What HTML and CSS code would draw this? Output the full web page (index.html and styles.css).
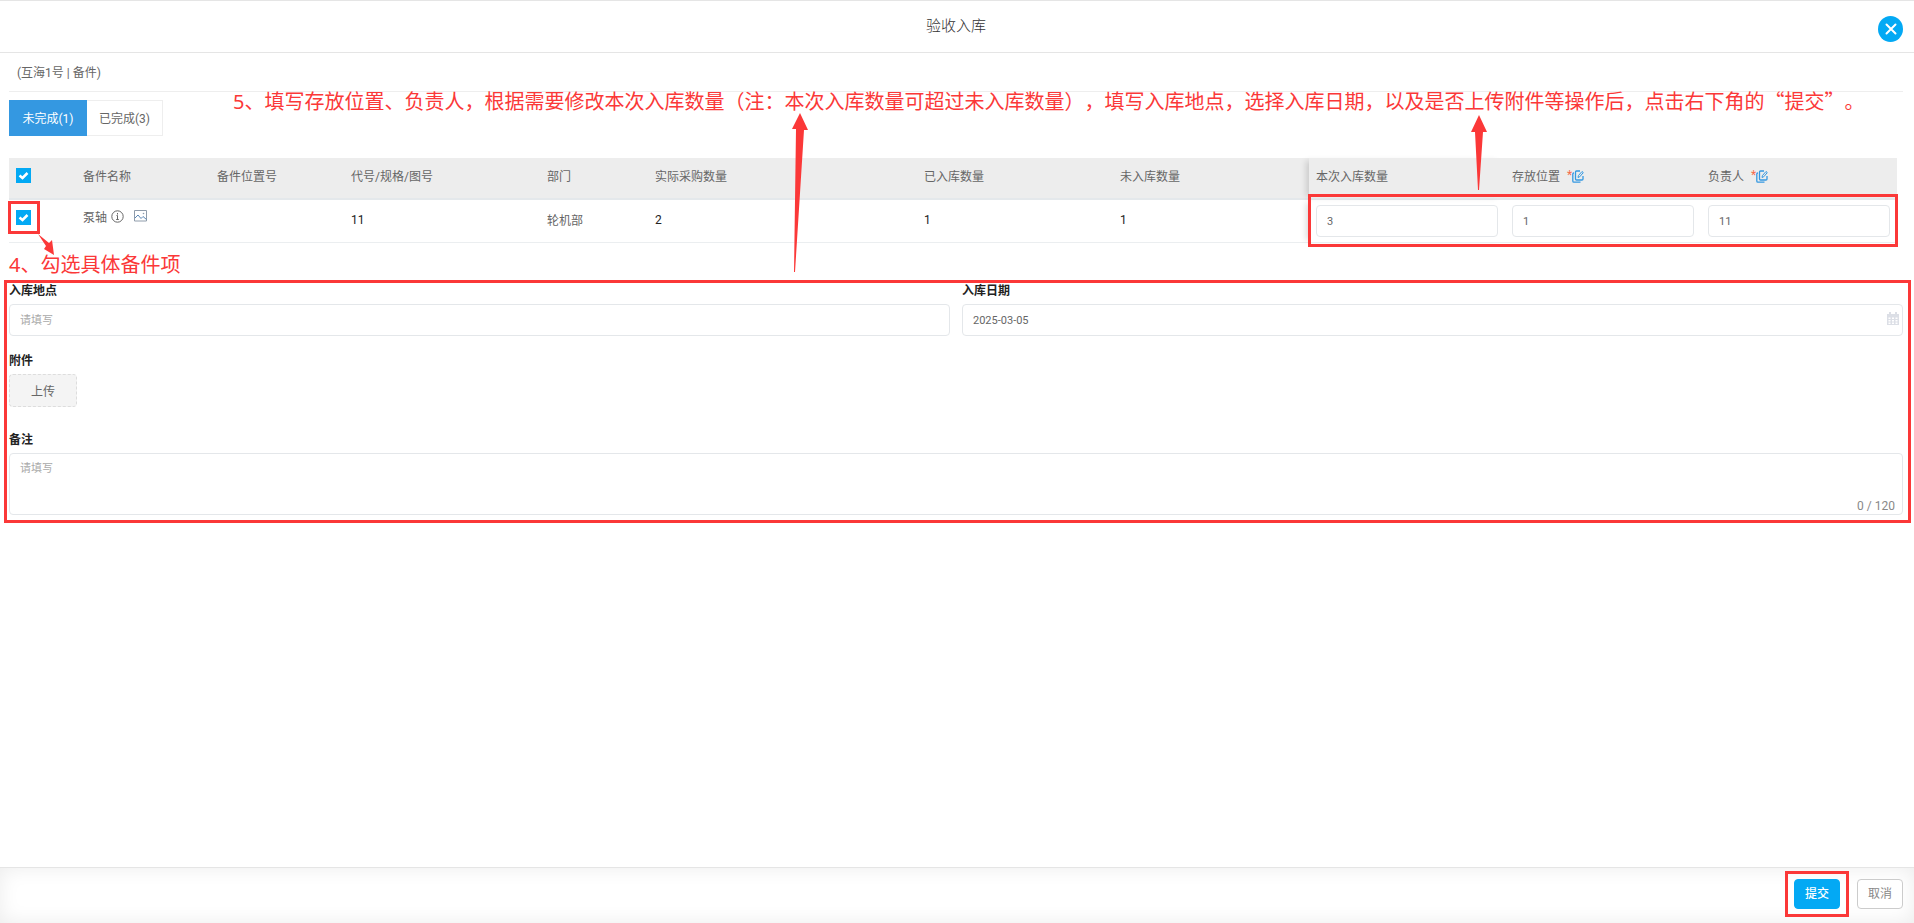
FILE: index.html
```html
<!DOCTYPE html>
<html lang="zh-CN">
<head>
<meta charset="utf-8">
<title>验收入库</title>
<link rel="stylesheet" href="styles.css">
</head>
<body>
<svg class="defs" aria-hidden="true">
  <symbol id="edit" viewBox="0 0 12 13">
    <path d="M8 1H4.500Q3.500 1 3.500 2v7Q3.500 10 4.500 10h5.500Q11 10 11 9V6" fill="none" stroke="currentColor" stroke-width="1.300"/>
    <path d="M2 3H1.800Q.8 3 .8 4v7Q.8 12.200 2 12.200h6.500" fill="none" stroke="currentColor" stroke-width="1.300"/>
    <path d="M6 7.500l.4-1.900L10 1.500l1.300 1.100-3.600 4.200z" fill="none" stroke="currentColor"/>
  </symbol>
</svg>
<div class="dialog">
  <header class="dialog-head">
    <h1 class="title">验收入库</h1>
    <button class="close" type="button" aria-label="关闭"><svg viewBox="0 0 12 12"><path d="M1.500 1.500l9 9M10.500 1.500l-9 9" stroke="#fff" stroke-width="2" stroke-linecap="round"/></svg></button>
  </header>

  <main class="content">
    <p class="crumb">(互海1号 | 备件)</p>
    <nav class="tabs">
      <button class="tab tab-on" type="button">未完成(1)</button><button class="tab" type="button">已完成(3)</button>
    </nav>

    <div class="table-wrap">
      <table class="grid">
        <colgroup><col class="c-check"><col class="c-name"><col class="c-name"><col class="c-std"><col class="c-dept"><col class="c-wide"><col class="c-std"><col class="c-std"><col class="c-std"><col class="c-std"><col class="c-std"></colgroup>
        <thead>
          <tr>
            <th><input class="check" type="checkbox" checked aria-label="全选"></th>
            <th>备件名称</th><th>备件位置号</th><th>代号/规格/图号</th><th>部门</th><th>实际采购数量</th><th>已入库数量</th><th>未入库数量</th>
            <th class="pinned">本次入库数量</th>
            <th><span class="head-edit">存放位置<i class="star">*</i><svg class="edit"><use href="#edit"/></svg></span></th>
            <th><span class="head-edit">负责人<i class="star">*</i><svg class="edit"><use href="#edit"/></svg></span></th>
          </tr>
        </thead>
        <tbody>
          <tr>
            <td><span class="check-mark"><input class="check" type="checkbox" checked aria-label="选择泵轴"></span></td>
            <td><span class="part">泵轴
              <svg class="info" viewBox="0 0 13 13"><circle cx="6.500" cy="6.500" r="5.700" fill="none" stroke="#666"/><path d="M6.500 3v1.500M5.500 5.500h1v4M5.200 9.500h2.600" fill="none" stroke="#666"/></svg>
              <svg class="image" viewBox="0 0 13 12"><path d="M.5.5h12v10.500H.5z" fill="none" stroke="#8f9cab"/><path d="M1 8l3-3 3 3.500 2-2 3.500 3" fill="none" stroke="#5d88b5"/><circle cx="9.500" cy="3.500" r=".8" fill="#8f9cab"/></svg></span></td>
            <td></td><td class="num">11</td><td class="dept">轮机部</td><td class="num">2</td><td class="num">1</td><td class="num">1</td>
            <td class="pinned field-cell"><input class="box" type="text" value="3" aria-label="本次入库数量"></td>
            <td class="field-cell"><input class="box" type="text" value="1" aria-label="存放位置"></td>
            <td class="field-cell"><input class="box" type="text" value="11" aria-label="负责人"></td>
          </tr>
        </tbody>
      </table>
      <div class="mark mark-fields"></div>
    </div>

    <p class="note note-check">4、勾选具体备件项</p>

    <form class="form">
      <div class="pair">
        <div class="field"><label class="label" for="place">入库地点</label><input class="box" id="place" type="text" placeholder="请填写"></div>
        <div class="field"><label class="label" for="date">入库日期</label>
          <div class="date"><input class="box" id="date" type="text" value="2025-03-05">
            <svg class="calendar" viewBox="0 0 12 13"><path d="M0 2h12v11H0z" fill="#dcdfe6"/><path d="M2 0h2v3H2zM8 0h2v3H8z" fill="#dcdfe6"/><path d="M1.500 5.500h2v1.500h-2zM5 5.500h2v1.500H5zM8.500 5.500h2v1.500h-2zM1.500 8h2v1.500h-2zM5 8h2v1.500H5zM8.500 8h2v1.500h-2zM1.500 10.500h2V12h-2zM5 10.500h2V12H5zM8.500 10.500h2V12h-2z" fill="#fff"/></svg></div></div>
      </div>
      <div class="field"><span class="label">附件</span><button class="upload" type="button">上传</button></div>
      <div class="field remark"><label class="label" for="remark">备注</label>
        <div class="area"><textarea class="box" id="remark" placeholder="请填写"></textarea><span class="count">0 / 120</span></div></div>
      <div class="mark mark-form"></div>
    </form>
  </main>

  <footer class="dialog-foot">
    <span class="submit-mark"><button class="btn btn-primary" type="button">提交</button></span>
    <button class="btn" type="button">取消</button>
  </footer>

  <p class="note note-fill">5、填写存放位置、负责人，根据需要修改本次入库数量（注：本次入库数量可超过未入库数量），填写入库地点，选择入库日期，以及是否上传附件等操作后，点击右下角的<span class="quoted">“提交”</span>。</p>
  <svg class="arrow arrow-form" viewBox="0 0 16 160"><path d="M8 0l8 17h-4L3 159H2L4 16H0z"/></svg>
  <svg class="arrow arrow-fields" viewBox="0 0 16 75"><path d="M8 0l8 17h-4L8 75H7L4 17H0z"/></svg>
  <svg class="arrow arrow-check" viewBox="0 0 17 22"><path d="M0 0l11 9 3-3 2 15-10-6 2-3z"/></svg>
</div>
</body>
</html>
```

FILE: styles.css
```css
* { box-sizing: border-box; }
html, body { height: 100%; }
body, h1, p { margin: 0; }
body, button, input, textarea {
  font-family: Roboto, "Noto Sans CJK SC", sans-serif;
  font-size: 12px;
  color: #666;
}
.defs { position: absolute; width: 0; height: 0; }
.dialog { position: relative; display: flex; flex-direction: column; min-height: 100%; background: #fff; }

.dialog-head {
  display: flex; align-items: center; justify-content: center; position: relative;
  height: 53px; padding: 0 2px 2px 0; border-top: 1px solid #e5e5e5; border-bottom: 1px solid #e5e5e5;
}
.title { font-size: 15px; font-weight: 300; line-height: 22px; color: #333; }
.close {
  position: absolute; right: 11px; top: 15px; width: 25px; height: 26px; padding: 0;
  display: grid; place-items: center; border: 0; border-radius: 50%; background: #03a9f4;
}
.close svg { width: 12px; height: 12px; }

.content { flex: 1; padding: 0 11px 0 9px; }
.crumb { height: 39px; padding-left: 8px; line-height: 40px; border-bottom: 1px solid #eee; }
.tabs { display: flex; margin-top: 8px; }
.tab { width: 76px; height: 36px; padding: 0 0 2px; border: 1px solid #eee; border-left: 0; background: #fff; }
.tab-on { width: 78px; border: 0; background: #3498e1; color: #fff; }

.table-wrap { position: relative; margin: 22px 6px 0 0; }
.grid { width: 100%; table-layout: fixed; border-collapse: separate; border-spacing: 0; }
.c-check { width: 67px; }
.c-name { width: 134px; }
.c-std { width: 196px; }
.c-dept { width: 108px; }
.c-wide { width: 269px; }
.grid th { height: 42px; padding: 0 7px 6px; text-align: left; font-weight: 400; background: #ededed; border-bottom: 2px solid #e4e8eb; }
.grid td { height: 43px; padding: 0 7px 2px; border-bottom: 1px solid #ebeef0; }
.grid .field-cell { padding-bottom: 0; }
.grid .num { color: #222; }
.grid .dept { padding-bottom: 4px; }
.pinned { box-shadow: -6px 0 6px -3px rgba(0, 0, 0, .14); }
.check {
  appearance: none; display: block; width: 15px; height: 15px; margin: 0;
  background: #03a9f4 url("data:image/svg+xml,%3Csvg xmlns='http://www.w3.org/2000/svg' viewBox='0 0 15 15'%3E%3Cpath d='M3.500 7.500l3 2.500 5-5' fill='none' stroke='white' stroke-width='2.500'/%3E%3C/svg%3E");
}
.check-mark { display: block; width: 32px; margin: -6px 0 0 -8px; padding: 6px 5px; border: 3px solid #fb3838; }
.head-edit { display: flex; align-items: center; }
.star { margin-left: 7px; font-style: normal; color: #f56c4c; }
.edit { width: 12px; height: 13px; margin-top: 2px; color: #3498e1; }
.part { display: flex; align-items: center; margin-top: -8px; }
.info { width: 13px; height: 13px; margin-left: 4px; }
.image { width: 13px; height: 12px; margin-left: 10px; }

.box { display: block; width: 100%; height: 32px; padding: 0 10px; border: 1px solid #e4e7ea; border-radius: 4px; outline: 0; background: #fff; font-size: 11px; }
.box::placeholder { color: #aaa; }
.form { position: relative; }
.pair { display: grid; grid-template-columns: 1fr 1fr; gap: 12px; margin-bottom: 16px; }
.label { display: block; height: 22px; line-height: 18px; font-weight: 700; color: #222; }
.date, .area { position: relative; }
.calendar { position: absolute; right: 4px; top: 8px; width: 12px; height: 13px; }
.upload { display: block; height: 33px; width: 68px; padding-bottom: 2px; border: 1px dashed #ddd; border-radius: 4px; background: #f4f4f4; }
.remark { margin-top: 24px; }
.form textarea.box { height: 62px; padding: 5px 10px; resize: none; }
.count { position: absolute; right: 8px; bottom: 2px; line-height: 14px; color: #888; }

.dialog-foot {
  display: flex; align-items: center; justify-content: flex-end; gap: 8px;
  height: 56px; padding: 0 11px 4px 0; border-top: 1px solid #e5e5e5;
  box-shadow: inset 0 0 20px rgba(0, 0, 0, .08);
}
.submit-mark { padding: 5px 6px; border: 3px solid #fb3838; }
.btn { display: block; width: 46px; height: 30px; padding: 0 0 2px; border: 1px solid #ccc; border-radius: 4px; background: #fff; color: #888; }
.btn-primary { border-color: #03a9f4; background: #03a9f4; color: #fff; font-weight: 500; }

.mark { position: absolute; border: 3px solid #fb3838; pointer-events: none; }
.mark-fields { top: 36px; right: -1px; bottom: -4px; width: 590px; }
.mark-form { inset: -2px -8px -8px -5px; }
.note { font-family: "Noto Sans", "Noto Sans CJK SC", sans-serif; font-size: 20px; line-height: 28px; color: #fb3838; text-spacing-trim: space-all; }
.quoted { font-family: "Noto Sans CJK SC", sans-serif; }
.note-check { margin: 8px 0 3px; }
.note-fill { position: absolute; left: 233px; top: 87px; white-space: nowrap; }
.arrow { position: absolute; fill: #fb3838; }
.arrow-form { left: 792px; top: 113px; width: 16px; height: 160px; }
.arrow-fields { left: 1471px; top: 115px; width: 16px; height: 75px; }
.arrow-check { left: 38px; top: 234px; width: 17px; height: 22px; }
```
